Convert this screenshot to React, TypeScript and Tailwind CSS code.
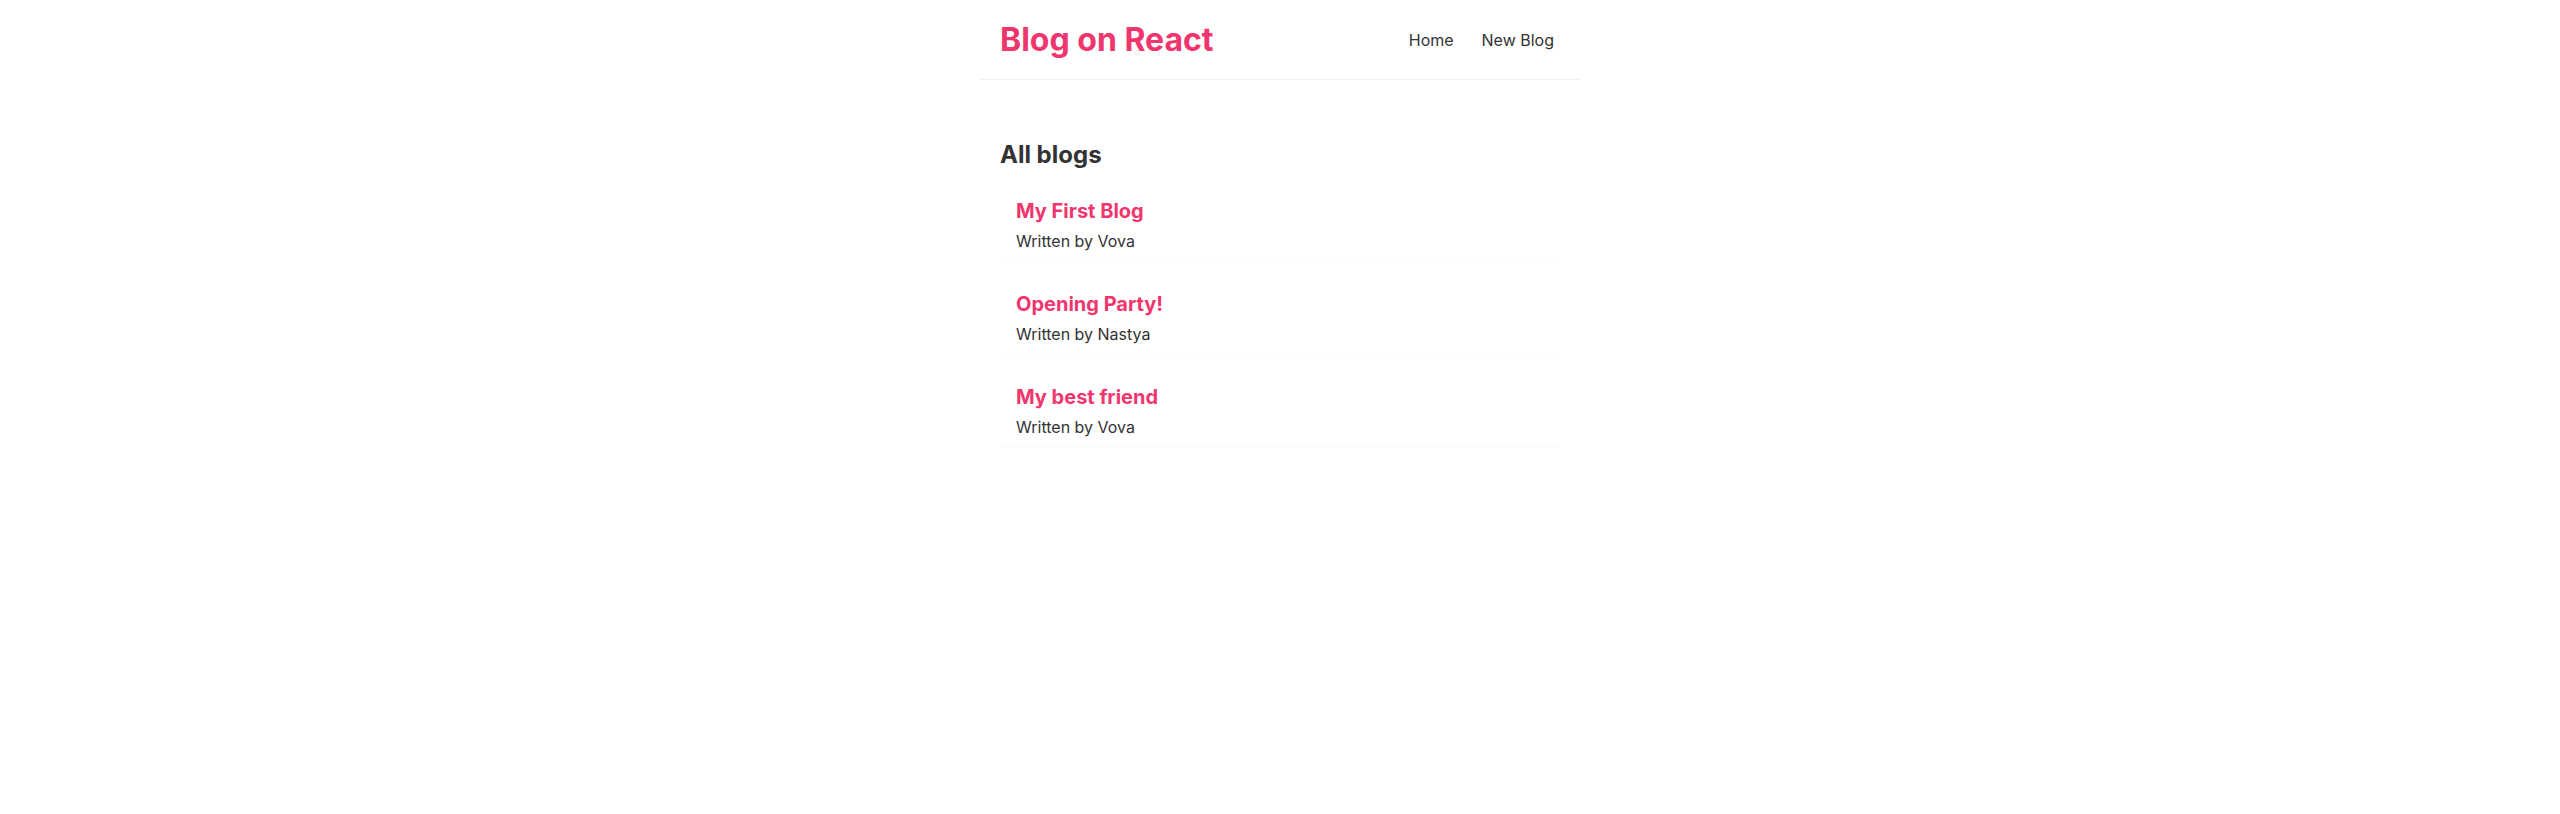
const blogs = [
  { id: 1, title: "My First Blog", author: "Vova" },
  { id: 2, title: "Opening Party!", author: "Nastya" },
  { id: 3, title: "My best friend", author: "Vova" },
];

function Navbar() {
  return (
    <nav className="mx-auto flex max-w-[600px] items-center border-b border-[#f2f2f2] p-5">
      <h1 className="text-[32px] leading-[normal] font-bold text-[#f1356d]">Blog on React</h1>
      <div className="ml-auto leading-[normal]">
        <a href="/" className="ml-4 p-1.5 text-base text-[#333]">
          Home
        </a>
        <a href="/create" className="ml-4 p-1.5 text-base text-[#333]">
          New Blog
        </a>
      </div>
    </nav>
  );
}

export default function App() {
  return (
    <div className="min-h-screen bg-white font-['Inter',sans-serif] leading-[normal] text-[#333]">
      <Navbar />
      <div className="mx-auto my-10 max-w-[600px] p-5">
        <h2 className="text-2xl leading-[normal] font-bold text-[#333]">All blogs</h2>
        {blogs.map((blog) => (
          <div key={blog.id} className="my-5 border-b border-[#fafafa] px-4 py-2.5">
            <h2 className="mb-2 text-xl leading-[normal] font-bold text-[#f1356d]">{blog.title}</h2>
            <p className="text-base leading-[normal] text-[#333]">Written by {blog.author}</p>
          </div>
        ))}
      </div>
    </div>
  );
}
